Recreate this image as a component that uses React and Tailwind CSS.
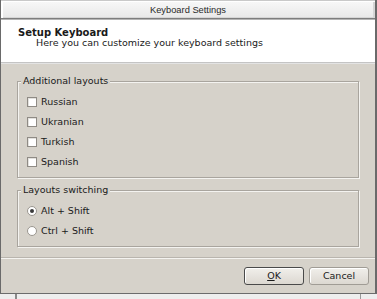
export default function App() {
  const Check = ({ label }) => (
    <div className="h-[20px] flex items-center pl-[9px]">
      <div className="w-[10px] h-[10px] bg-white border border-[#8f8b85] shadow-[inset_1px_1px_0_#e4e2de]" />
      <span className="ml-[4px] leading-[12px]">{label}</span>
    </div>
  );
  const Radio = ({ label, on }) => (
    <div className="h-[20px] flex items-center pl-[9px]">
      <div className="w-[10px] h-[10px] rounded-full bg-white border border-[#9a968f] flex items-center justify-center">
        {on && <div className="w-[4px] h-[4px] rounded-full bg-[#3a3a3a]" />}
      </div>
      <span className="ml-[4px] leading-[12px]">{label}</span>
    </div>
  );
  return (
    <div className="w-[377px] h-[299px] flex flex-col overflow-hidden bg-[#d6d2ca] text-[#1a1a1a] font-['DejaVu_Sans',sans-serif] text-[9.5px]">
      <div className="flex-1 flex flex-col border-l border-l-[#6a6a6a] border-r-2 border-r-[#6a6a6a] min-h-0">
        {/* title bar */}
        <div className="h-[18px] border-t border-t-[#c9c9c9] bg-gradient-to-b from-[#f8f8f8] to-[#e8e8e8] shadow-[inset_2px_1px_0_#ffffff,inset_-2px_-1px_0_#d6d6d6] flex items-center justify-center">
          <span className="font-['Liberation_Sans',sans-serif] text-[9.3px] text-[#2a2a2a] leading-[12px]">Keyboard Settings</span>
        </div>
        <div className="h-px bg-[#7d7d7d]" />
        <div className="h-px bg-[#b4b4b4]" />
        {/* header */}
        <div className="h-[42px] bg-white pt-[8px]">
          <div className="pl-[17px] font-bold text-[10px] leading-[10px]">Setup Keyboard</div>
          <div className="pl-[35px] leading-[10px]">Here you can customize your keyboard settings</div>
        </div>
        <div className="h-px bg-[#c4c4c4]" />
        <div className="h-px bg-[#e3e3e3]" />
        {/* body */}
        <div className="flex-1 flex flex-col min-h-0">
          <div className="px-[16px] pt-[11px] flex flex-col">
            <fieldset className="border border-[#a9a59e] shadow-[inset_1px_1px_0_#f4f3f0,1px_1px_0_#f4f3f0] pt-[5px] pb-[5px]">
              <legend className="ml-[3px] px-[2px] bg-[#d6d2ca] leading-[12px]">Additional layouts</legend>
              <Check label="Russian" />
              <Check label="Ukranian" />
              <Check label="Turkish" />
              <Check label="Spanish" />
            </fieldset>
            <fieldset className="mt-[6px] border border-[#a9a59e] shadow-[inset_1px_1px_0_#f4f3f0,1px_1px_0_#f4f3f0] pt-[5px] pb-[5px]">
              <legend className="ml-[3px] px-[2px] bg-[#d6d2ca] leading-[12px]">Layouts switching</legend>
              <Radio label="Alt + Shift" on />
              <Radio label="Ctrl + Shift" />
            </fieldset>
          </div>
          <div className="mt-[10px] h-px bg-[#b9b5ae]" />
          <div className="h-px bg-[#f4f3f0]" />
          <div className="mt-[8px] flex justify-end gap-[5px] pr-[6px]">
            <button className="w-[60px] h-[18px] rounded-[3px] border border-[#4a4a4a] bg-gradient-to-b from-[#f1efeb] to-[#dcd8d1] shadow-[inset_1px_1px_0_#ffffff] flex items-center justify-center leading-[12px]">
              <span><span className="underline underline-offset-[1px]">O</span>K</span>
            </button>
            <button className="w-[60px] h-[18px] rounded-[3px] border border-[#a09c95] bg-gradient-to-b from-[#f1efeb] to-[#dcd8d1] shadow-[inset_1px_1px_0_#ffffff] flex items-center justify-center leading-[12px]">
              Cancel
            </button>
          </div>
        </div>
      </div>
      {/* bottom strip */}
      <div className="h-px bg-[#6c6c6c]" />
      <div className="h-[5px] bg-[#eeeeee] flex">
        <div className="w-[15px]" />
        <div className="w-[2px] bg-[#8a8a8a]" />
        <div className="flex-1" />
        <div className="w-px bg-[#9a9a9a]" />
        <div className="w-[16px]" />
      </div>
    </div>
  );
}
